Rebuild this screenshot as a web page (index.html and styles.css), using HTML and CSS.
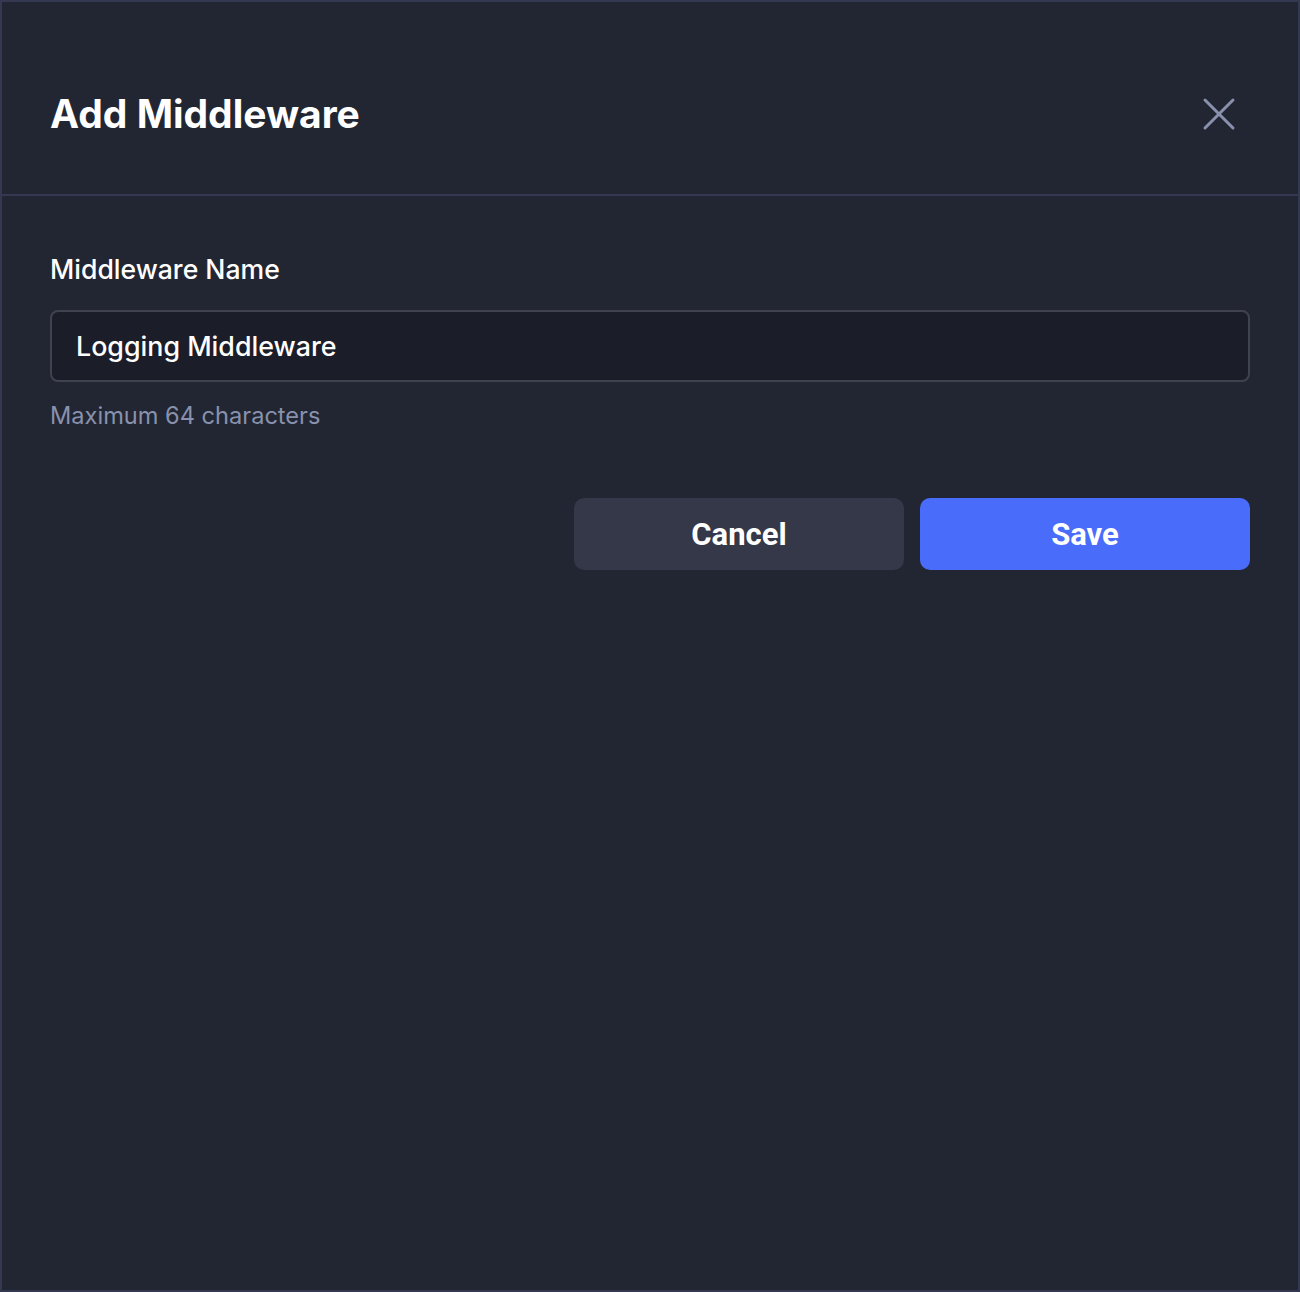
FILE: index.html
```html
<!DOCTYPE html>
<html lang="en">
<head>
<meta charset="utf-8">
<title>Add Middleware</title>
<link rel="stylesheet" href="styles.css">
</head>
<body>
<div class="modal">
  <header class="modal-header">
    <h1 class="modal-title">Add Middleware</h1>
    <button class="close-btn" aria-label="Close">
      <svg width="34" height="34" viewBox="0 0 34 34" fill="none" stroke="#8a91ad" stroke-width="3" stroke-linecap="round">
        <path d="M3 3 L31 31 M31 3 L3 31"/>
      </svg>
    </button>
  </header>
  <section class="modal-body">
    <label class="field-label" for="name">Middleware Name</label>
    <div class="input-box">Logging Middleware</div>
    <p class="hint">Maximum 64 characters</p>
    <div class="actions">
      <button class="btn btn-cancel">Cancel</button>
      <button class="btn btn-save">Save</button>
    </div>
  </section>
</div>
</body>
</html>
```
FILE: styles.css
```css
* { box-sizing: border-box; }
html, body { margin: 0; padding: 0; }
body {
  background: #222632;
  font-family: Inter, "Noto Sans", sans-serif;
  color: #ffffff;
}
.modal {
  width: 1300px;
  height: 1292px;
  border: 2px solid #343850;
  background: #222632;
}
.modal-header {
  height: 194px;
  border-bottom: 2px solid #343850;
  display: flex;
  align-items: center;
  justify-content: space-between;
  padding: 30px 48px 0 48px;
}
.modal-title {
  margin: 0;
  font-size: 39px;
  font-weight: 700;
  letter-spacing: 0;
  color: #ffffff;
}
.close-btn {
  background: none;
  border: 0;
  padding: 0;
  width: 34px;
  height: 34px;
  margin: 2px 14px 0 0;
  display: flex;
}
.modal-body {
  padding: 56px 48px 0 48px;
  display: flex;
  flex-direction: column;
}
.field-label {
  font-size: 26.6px;
  font-weight: 500;
  line-height: 34px;
  color: #ffffff;
}
.input-box {
  margin-top: 24px;
  height: 72px;
  border: 2px solid #40434f;
  border-radius: 8px;
  background: #1b1d29;
  padding: 0 24px;
  display: flex;
  align-items: center;
  font-size: 26.8px;
  font-weight: 500;
  color: #ffffff;
}
.hint {
  margin: 19px 0 0 0;
  font-size: 23.6px;
  line-height: 30px;
  color: #8891ad;
}
.actions {
  margin-top: 67px;
  display: flex;
  justify-content: flex-end;
  gap: 16px;
}
.btn {
  width: 330px;
  height: 72px;
  border: 0;
  border-radius: 10px;
  font-family: Roboto, sans-serif;
  font-size: 31px;
  font-weight: 700;
  color: #ffffff;
}
.btn-cancel { background: #343849; }
.btn-save { background: #4a6cfb; }
```
